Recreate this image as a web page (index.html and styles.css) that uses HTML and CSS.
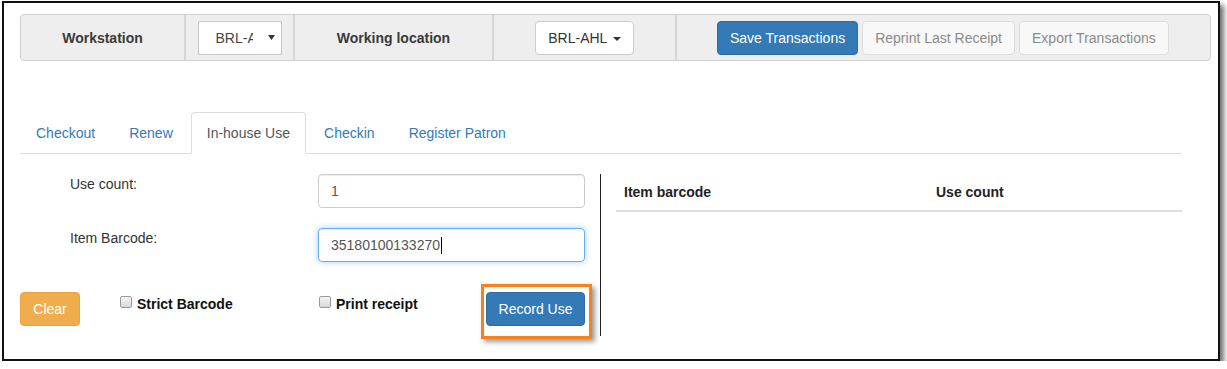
FILE: index.html
```html
<!DOCTYPE html>
<html lang="en">
<head>
<meta charset="utf-8">
<title>In-house Use</title>
<link rel="stylesheet" href="styles.css">
</head>
<body>
<div class="frame">
  <div class="toolbar">
    <div class="cell cell-ws"><span class="cell-label">Workstation</span></div>
    <div class="cell cell-sel">
      <div class="select">
        <span class="select-text">BRL-AHL</span>
        <svg class="select-arrow" width="7" height="5" viewBox="0 0 7 5"><path d="M0 0H7L3.5 5Z" fill="#333"/></svg>
      </div>
    </div>
    <div class="cell cell-loc"><span class="cell-label">Working location</span></div>
    <div class="cell cell-drop"><button class="btn btn-default">BRL-AHL <span class="caret"></span></button></div>
    <div class="cell cell-actions">
      <button class="btn btn-primary">Save Transactions</button>
      <button class="btn btn-disabled">Reprint Last Receipt</button>
      <button class="btn btn-disabled">Export Transactions</button>
    </div>
  </div>

  <ul class="tabs">
    <li class="tab"><a>Checkout</a></li>
    <li class="tab"><a>Renew</a></li>
    <li class="tab active"><a>In-house Use</a></li>
    <li class="tab"><a>Checkin</a></li>
    <li class="tab"><a>Register Patron</a></li>
  </ul>

  <div class="panel-row">
    <div class="form-col">
      <div class="form-row">
        <label class="form-label">Use count:</label>
        <div class="form-control">1</div>
      </div>
      <div class="form-row">
        <label class="form-label">Item Barcode:</label>
        <div class="form-control focused">35180100133270<span class="text-caret"></span></div>
      </div>
      <div class="actions-row">
        <button class="btn btn-warning">Clear</button>
        <label class="check"><span class="checkbox"></span>Strict Barcode</label>
        <label class="check"><span class="checkbox"></span>Print receipt</label>
        <div class="record-wrap">
          <button class="btn btn-primary">Record Use</button>
          <span class="highlight"></span>
        </div>
      </div>
    </div>
    <div class="list-col">
      <table class="list-table">
        <thead>
          <tr><th class="col-barcode">Item barcode</th><th>Use count</th></tr>
        </thead>
        <tbody></tbody>
      </table>
    </div>
  </div>
</div>
</body>
</html>
```

FILE: styles.css
```css
* { box-sizing: border-box; }

html, body {
  margin: 0;
  padding: 0;
  background: #fff;
}

body {
  font-family: "Liberation Sans", Arial, sans-serif;
  font-size: 14px;
  line-height: 20px;
  color: #333;
}

.frame {
  margin: 1px 0 0 2px;
  width: 1218px;
  height: 360px;
  border: 2px solid #111;
  box-shadow: 4px 4px 5px rgba(0, 0, 0, 0.55);
  padding: 11px 0 0 16px;
  background: #fff;
}

/* toolbar */
.toolbar {
  display: flex;
  width: 1191px;
  height: 47px;
  background: #eee;
  border: 1px solid #cfcfcf;
  border-radius: 4px;
}

.cell {
  display: flex;
  align-items: center;
  justify-content: center;
  height: 100%;
}

.cell + .cell { border-left: 2px solid #d6d6d6; }

.cell-ws { width: 163px; }
.cell-sel { width: 109px; }
.cell-loc { width: 199px; }
.cell-drop { width: 183px; }
.cell-actions {
  flex: 1;
  justify-content: flex-start;
  padding-left: 40px;
  gap: 4px;
}

.cell-label {
  font-weight: bold;
  color: #3a3a3a;
}

.select {
  display: flex;
  align-items: center;
  width: 84px;
  height: 34px;
  background: #fff;
  border: 1px solid #cacaca;
  padding-left: 17px;
}

.select-text {
  display: block;
  width: 37px;
  overflow: hidden;
  white-space: nowrap;
  color: #444;
}

.select-arrow {
  margin-left: 15px;
}

/* buttons */
.btn {
  font-family: inherit;
  font-size: 14px;
  line-height: 20px;
  height: 34px;
  padding: 6px 12px;
  border: 1px solid transparent;
  border-radius: 4px;
  white-space: nowrap;
  cursor: pointer;
}

.btn-default {
  background: #fff;
  border-color: #ccc;
  color: #333;
}

.btn-primary {
  background: #337ab7;
  border-color: #2e6da4;
  color: #fff;
}

.btn-disabled {
  background: #f8f8f8;
  border-color: #dcdcdc;
  color: #8a8a8a;
  cursor: not-allowed;
}

.btn-warning {
  background: #f0ad4e;
  border-color: #eea236;
  color: #fff;
  width: 60px;
  padding: 6px 0;
}

.caret {
  display: inline-block;
  width: 0;
  height: 0;
  margin-left: 2px;
  vertical-align: middle;
  border-top: 4px solid #333;
  border-left: 4px solid transparent;
  border-right: 4px solid transparent;
}

/* tabs */
.tabs {
  display: flex;
  list-style: none;
  margin: 51px 0 0;
  padding: 0;
  width: 1162px;
  border-bottom: 1px solid #ddd;
}

.tab {
  margin-bottom: -1px;
  margin-right: 2px;
}

.tab a {
  display: block;
  padding: 10px 15px;
  line-height: 20px;
  border: 1px solid transparent;
  border-radius: 4px 4px 0 0;
  color: #337ab7;
}

.tab.active a {
  color: #555;
  background: #fff;
  border-color: #ddd #ddd transparent #ddd;
}

/* panel */
.panel-row {
  display: flex;
  width: 1162px;
  margin-top: 20px;
}

.form-col {
  width: 580px;
  padding: 0 15px 10px 0;
}

.form-row {
  display: grid;
  grid-template-columns: 248px 267px;
  padding-left: 50px;
  margin-bottom: 20px;
}

.form-label {
  line-height: 20px;
  color: #333;
}

.form-control {
  height: 34px;
  padding: 6px 12px;
  border: 1px solid #ccc;
  border-radius: 4px;
  box-shadow: inset 0 1px 1px rgba(0, 0, 0, 0.075);
  color: #555;
  display: flex;
  align-items: center;
}

.form-control.focused {
  border-color: #66afe9;
  box-shadow: inset 0 1px 1px rgba(0, 0, 0, 0.075), 0 0 6px rgba(102, 175, 233, 0.6);
}

.text-caret {
  display: inline-block;
  width: 1px;
  height: 17px;
  background: #000;
  margin-left: 1px;
}

.actions-row {
  display: grid;
  grid-template-columns: 100px 199px 1fr auto;
  align-items: start;
  padding-top: 10px;
  margin-top: 0;
}

.check {
  display: inline-flex;
  align-items: center;
  gap: 5px;
  margin-top: 2px;
  font-weight: bold;
  color: #111;
}

.checkbox {
  display: inline-block;
  width: 12px;
  height: 12px;
  border: 1px solid #9a9a9a;
  border-radius: 2px;
  background: linear-gradient(#f4f4f4, #d8d8d8);
  margin-top: -4px;
}

.record-wrap {
  position: relative;
}

.record-wrap .btn {
  width: 99px;
  padding: 6px 0;
}

.highlight {
  position: absolute;
  left: -5px;
  top: -8px;
  right: -7px;
  bottom: -13px;
  border: 3px solid #f7821b;
  box-shadow: 3px 3px 5px rgba(0, 0, 0, 0.4);
  pointer-events: none;
}

.list-col {
  flex: 1;
  border-left: 1px solid #222;
  padding-left: 15px;
}

.list-table {
  width: 100%;
  border-collapse: collapse;
}

.list-table th {
  text-align: left;
  padding: 8px;
  line-height: 20px;
  border-bottom: 2px solid #ddd;
  font-weight: bold;
  color: #222;
}

.list-table .col-barcode { width: 312px; }
```
